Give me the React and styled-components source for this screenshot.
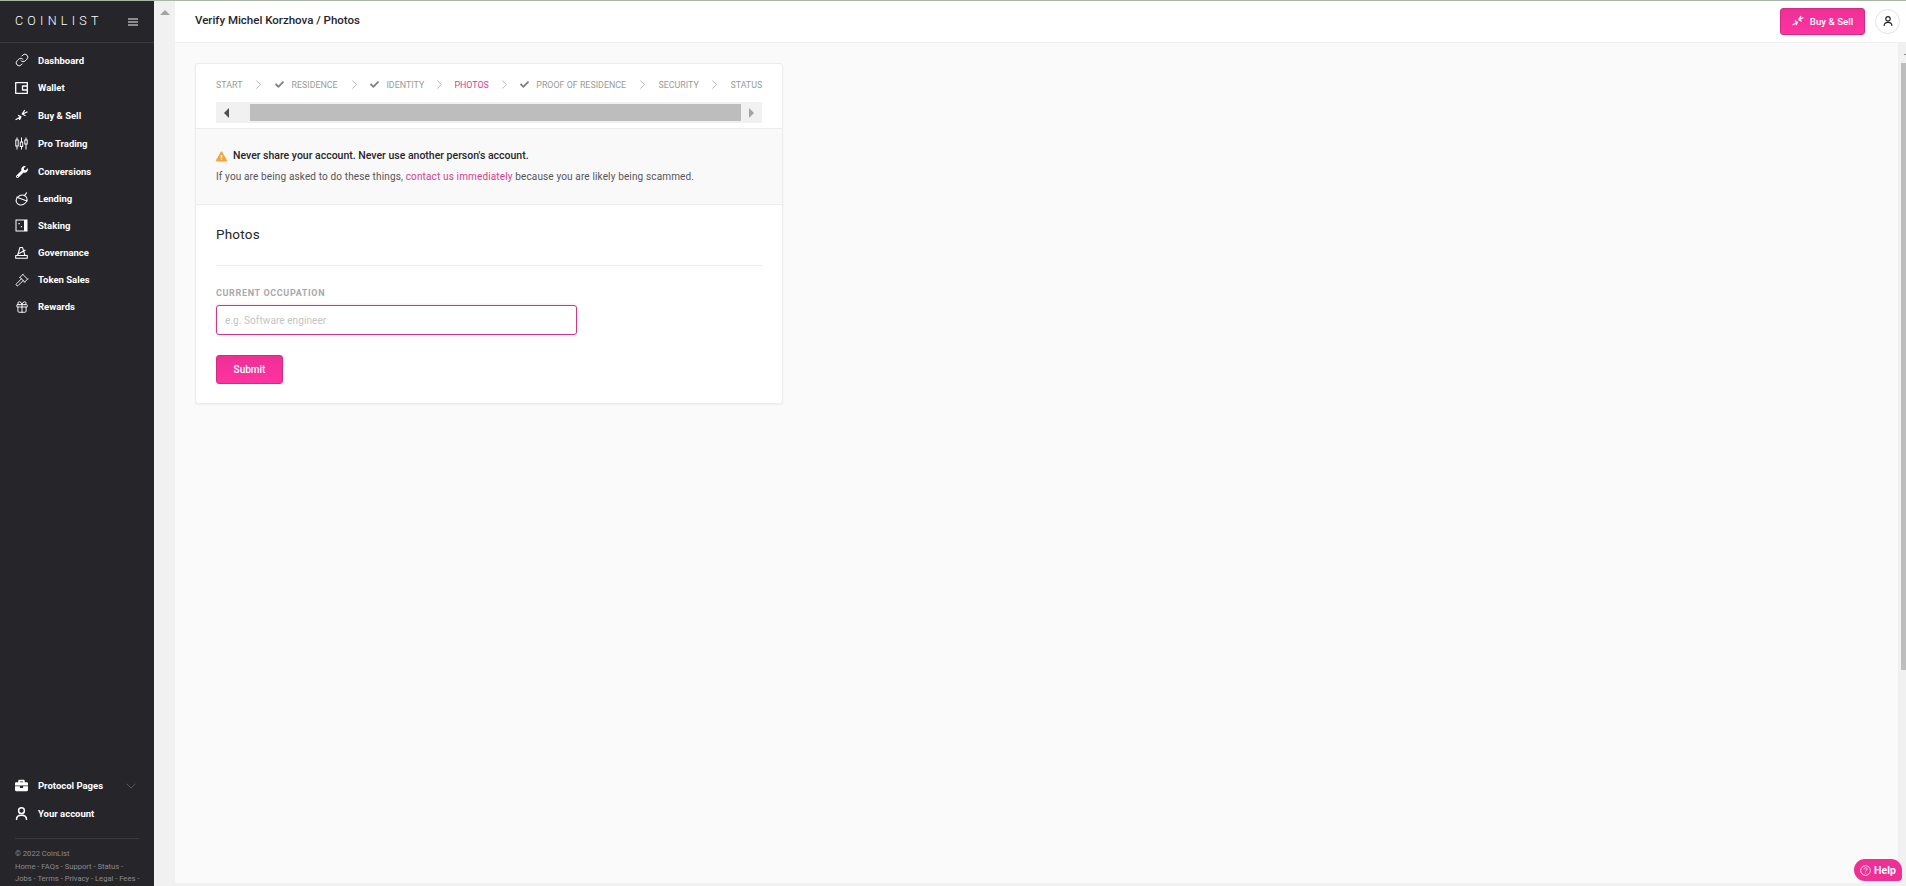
import React from "react";
import styled, { createGlobalStyle } from "styled-components";
import { Link, Gavel, Gift, ChevronDown, ChevronRight } from "lucide-react";
import { FaWrench, FaBriefcase, FaExclamationTriangle, FaCheck } from "react-icons/fa";

const Global = createGlobalStyle`
  html, body { margin: 0; padding: 0; height: 100%; overflow: hidden; }
  body { font-family: Roboto, "Liberation Sans", sans-serif; background: #fafafa; color: #26252a; }
  * { box-sizing: border-box; }
`;

const Page = styled.div`
  position: relative;
  display: flex;
  width: 1906px;
  height: 886px;
  overflow: hidden;
  border-top: 1px solid #a9b5a6;
`;

const Sidebar = styled.aside`
  flex: 0 0 154px;
  width: 154px;
  min-width: 0;
  display: flex;
  flex-direction: column;
  background: #26252a;
  color: #fff;
`;

const Brand = styled.div`
  flex: 0 0 42px;
  display: flex;
  align-items: center;
  justify-content: space-between;
  padding: 0 16px 0 15px;
  border-bottom: 1px solid #3a393e;
`;

const Logo = styled.span`
  font-size: 12.5px;
  font-weight: 300;
  letter-spacing: 4.25px;
  line-height: 1;
`;

const Burger = styled.span`
  width: 10px;
  height: 8px;
  border-top: 2px solid #8b8a8e;
  border-bottom: 2px solid #8b8a8e;
  position: relative;
  &::after {
    content: "";
    position: absolute;
    left: 0;
    right: 0;
    top: 1px;
    height: 2px;
    background: #8b8a8e;
  }
`;

const Nav = styled.nav`
  display: flex;
  flex-direction: column;
  padding-top: 4px;
`;

const NavItem = styled.a`
  flex: 0 0 ${props => props.$h}px;
  display: flex;
  align-items: center;
  gap: 10px;
  padding-left: 15px;
  font-size: 9.5px;
  font-weight: 700;
  color: #fff;
`;

const NavIcon = styled.span`
  flex: 0 0 13px;
  width: 13px;
  height: 14px;
  display: flex;
  align-items: center;
  justify-content: center;
  svg { display: block; flex: none; }
`;

const Foot = styled.div`
  margin-top: auto;
  height: 114px;
  overflow: hidden;
  display: flex;
  flex-direction: column;
`;

const ProtocolRow = styled(NavItem)`
  padding-right: 15px;
  svg.chev { margin-left: auto; color: #6e6d72; }
`;

const Legal = styled.div`
  margin: 11px 15px 0;
  padding-top: 9px;
  border-top: 1px solid #3a393e;
  font-size: 7.6px;
  line-height: 12.5px;
  color: #8c8b8f;
  white-space: nowrap;
  p { margin: 0; }
`;

const SideTrack = styled.div`
  flex: 0 0 21px;
  background: #f1f1f1;
  display: flex;
  justify-content: center;
  padding-top: 9px;
`;

const UpArrow = styled.span`
  width: 0;
  height: 0;
  border-left: 5px solid transparent;
  border-right: 5px solid transparent;
  border-bottom: 5px solid #a3a3a3;
`;

const Main = styled.main`
  flex: 1;
  display: flex;
  flex-direction: column;
  min-width: 0;
`;

const Header = styled.header`
  flex: 0 0 42px;
  display: flex;
  align-items: center;
  padding: 0 6px 0 20px;
  background: #fff;
  border-bottom: 1px solid #f0f0f0;
`;

const Crumb = styled.div`
  font-size: 11.5px;
  font-weight: 500;
  color: #26252a;
  margin-top: -3px;
`;

const HeaderRight = styled.div`
  margin-left: auto;
  display: flex;
  align-items: center;
  gap: 10px;
  margin-top: -1px;
`;

const PinkButton = styled.button`
  display: flex;
  align-items: center;
  justify-content: center;
  gap: 6px;
  width: ${props => props.$w}px;
  height: ${props => props.$h}px;
  background: linear-gradient(#ee2f96, #ff33a1);
  border: 1px solid #d42a86;
  border-radius: 3px;
  color: #fff;
  font-family: inherit;
  font-size: ${props => props.$size}px;
  font-weight: 500;
  padding: 0;
`;

const Avatar = styled.span`
  width: 25px;
  height: 25px;
  border-radius: 50%;
  border: 1px solid #e3e3e3;
  background: #fff;
  display: flex;
  align-items: center;
  justify-content: center;
`;

const Body = styled.div`
  flex: 1;
  display: flex;
  min-height: 0;
`;

const Scroller = styled.div`
  flex: 1;
  display: flex;
  flex-direction: column;
  min-width: 0;
`;

const Content = styled.div`
  flex: 1;
  padding: 20px;
`;

const BottomStrip = styled.div`
  flex: 0 0 3px;
  background: #f1f1f1;
`;

const Card = styled.section`
  width: 588px;
  height: 341px;
  background: #fff;
  border: 1px solid #ececec;
  border-radius: 3px;
  box-shadow: 0 1px 2px rgba(0, 0, 0, 0.05);
`;

const StepsArea = styled.div`
  height: 65px;
  padding: 12px 20px 0;
  border-bottom: 1px solid #ececec;
`;

const Steps = styled.div`
  display: flex;
  align-items: center;
  height: 17px;
  white-space: nowrap;
`;

const Step = styled.span`
  flex: none;
  display: inline-flex;
  align-items: center;
  gap: 7px;
  font-size: 8.9px;
  color: ${props => (props.$active ? "#d63d8e" : "#9a9a9a")};
  svg { color: #7f7f7f; }
`;

const Sep = styled.span`
  flex: 0 0 ${props => props.$w}px;
  display: flex;
  justify-content: center;
  color: #8d8d8d;
`;

const HScroll = styled.div`
  margin-top: 9px;
  height: 21px;
  display: flex;
  align-items: center;
  background: #f1f1f1;
`;

const HButton = styled.span`
  flex: 0 0 ${props => props.$w}px;
  display: flex;
  justify-content: ${props => (props.$left ? "flex-start" : "center")};
  padding-left: ${props => (props.$left ? 8 : 0)}px;
`;

const HArrow = styled.span`
  width: 0;
  height: 0;
  border-top: 5px solid transparent;
  border-bottom: 5px solid transparent;
  ${props => (props.$left ? "border-right: 5px solid #505050;" : "border-left: 5px solid #a3a3a3;")}
`;

const HThumb = styled.span`
  flex: 1;
  height: 17px;
  background: #bdbdbd;
`;

const Warning = styled.div`
  height: 76px;
  padding: 17px 20px 0;
  background: #f9f9f9;
  border-bottom: 1px solid #ececec;
`;

const WarnTitle = styled.div`
  display: flex;
  align-items: center;
  gap: 6px;
  font-size: 10.5px;
  font-weight: 500;
  line-height: 20px;
  color: #26252a;
  svg { color: #f5a33b; }
`;

const WarnText = styled.p`
  margin: 1px 0 0;
  font-size: 10px;
  letter-spacing: 0.14px;
  line-height: 20px;
  color: #55545a;
  a { color: #d63d8e; }
`;

const FormArea = styled.div`
  padding: 19px 20px 0;
`;

const Title = styled.h2`
  margin: 0;
  height: 42px;
  font-size: 13.5px;
  font-weight: 400;
  line-height: 20px;
  letter-spacing: 0.2px;
  color: #26252a;
  border-bottom: 1px solid #ececec;
`;

const Label = styled.label`
  display: block;
  margin-top: 21px;
  font-size: 9px;
  font-weight: 700;
  letter-spacing: 0.65px;
  line-height: 12px;
  color: #a9a8ad;
`;

const Input = styled.input`
  display: block;
  width: 361px;
  height: 30px;
  margin-top: 6px;
  padding: 0 8px;
  border: 1px solid #c8398a;
  border-radius: 3px;
  outline: none;
  box-shadow: 0 0 3px rgba(255, 51, 161, 0.25);
  font-family: inherit;
  font-size: 10px;
  letter-spacing: 0.08px;
  &::placeholder { color: #c4c4c4; }
`;

const SubmitWrap = styled.div`
  margin-top: 20px;
`;

const Help = styled.button`
  position: absolute;
  left: 1854px;
  top: 858px;
  width: 48px;
  height: 22px;
  display: flex;
  align-items: center;
  justify-content: center;
  gap: 3px;
  border: none;
  padding: 0;
  border-radius: 11px 11px 4px 11px;
  background: #ee2f96;
  color: #fff;
  font-family: inherit;
  font-size: 10.5px;
  font-weight: 700;
`;

const RightTrack = styled.div`
  flex: 0 0 8px;
  background: #f1f1f1;
  padding: 11px 0 0 3px;
`;

const RightArrow = styled.div`
  width: 2px;
  height: 1px;
  margin: 0 0 8px 3px;
  background: #8a8a8a;
`;

const RightThumb = styled.div`
  height: 607px;
  background: #bdbdbd;
`;

const stroke = { fill: "none", stroke: "currentColor", strokeWidth: 1.3, strokeLinecap: "round", strokeLinejoin: "round" };

const WalletIcon = () => (
  <svg width="13" height="12" viewBox="0 0 13 12" {...stroke}>
    <rect x="0.7" y="0.7" width="11.6" height="10.6" />
    <path d="M12 4H7.5v4H12" />
  </svg>
);

const SwapIcon = ({ size = 13 }) => (
  <svg width={size} height={size} viewBox="0 0 13 13" {...stroke}>
    <path d="M1 10.5 5.5 8M3.5 6.5l2.4 1.4-1.3 2.5" />
    <path d="M12 3 7.5 5M9.5 1.5 7.2 5l2.8 1.5" />
  </svg>
);

const CandleIcon = () => (
  <svg width="13" height="13" viewBox="0 0 13 13" fill="none" stroke="currentColor" strokeWidth="1">
    <path d="M2 0.5v12M6.5 0.5v12M11 0.5v12" />
    <rect x="0.8" y="3" width="2.4" height="6" fill="#26252a" />
    <rect x="5.3" y="5" width="2.4" height="4.5" fill="#26252a" />
    <rect x="9.8" y="3" width="2.4" height="4" fill="#26252a" />
  </svg>
);

const AcornIcon = () => (
  <svg width="14" height="14" viewBox="0 0 14 14" fill="none" stroke="currentColor" strokeWidth="1.05" strokeLinecap="round">
    <ellipse cx="6.6" cy="8" rx="5.6" ry="4.8" transform="rotate(-25 6.6 8)" />
    <path d="M1.8 5.2 12 9" />
    <path d="M9.5 3.6 11.6 0.9" />
  </svg>
);

const StakeIcon = () => (
  <svg width="13" height="13" viewBox="0 0 13 13">
    <rect x="0.5" y="0.5" width="12" height="12" fill="#fff" />
    <rect x="1.5" y="1.5" width="7.5" height="10" fill="#26252a" />
    <rect x="3.5" y="4" width="1.3" height="1.3" fill="#fff" />
    <rect x="5.8" y="7" width="1.3" height="1.3" fill="#fff" />
  </svg>
);

const GovernanceIcon = () => (
  <svg width="13" height="13" viewBox="0 0 13 13" fill="none" stroke="currentColor" strokeWidth="1.05" strokeLinejoin="round">
    <path d="M2.5 9.5 5 1.5h2.5l2.5 8" />
    <path d="M3 8 10.5 4" />
    <rect x="0.7" y="9.5" width="11.6" height="2.8" />
  </svg>
);

const UserIcon = ({ color = "currentColor", size = 13 }) => (
  <svg width={size} height={size} viewBox="0 0 13 13" fill="none" stroke={color} strokeWidth="1.5" strokeLinecap="round">
    <circle cx="6.5" cy="3.7" r="2.9" />
    <path d="M1.5 12.4c0-2.8 2-4.2 5-4.2s5 1.4 5 4.2" />
  </svg>
);

const navItems = [
  { label: "Dashboard", h: 26.5, icon: <Link size={14} strokeWidth={1.6} /> },
  { label: "Wallet", h: 28, icon: <WalletIcon /> },
  { label: "Buy & Sell", h: 28, icon: <SwapIcon /> },
  { label: "Pro Trading", h: 28, icon: <CandleIcon /> },
  { label: "Conversions", h: 28, icon: <FaWrench size={12} /> },
  { label: "Lending", h: 26.5, icon: <AcornIcon /> },
  { label: "Staking", h: 27, icon: <StakeIcon /> },
  { label: "Governance", h: 27, icon: <GovernanceIcon /> },
  { label: "Token Sales", h: 27, icon: <Gavel size={14} strokeWidth={1.6} /> },
  { label: "Rewards", h: 27, icon: <Gift size={14} strokeWidth={1.6} /> },
];

const steps = [
  { label: "START", sep: 33 },
  { label: "RESIDENCE", done: true, sep: 32.8 },
  { label: "IDENTITY", done: true, sep: 30.2 },
  { label: "PHOTOS", active: true, sep: 31.4 },
  { label: "PROOF OF RESIDENCE", done: true, sep: 32.4 },
  { label: "SECURITY", sep: 31.6 },
  { label: "STATUS" },
];

export default function App() {
  return (
    <>
      <Global />
      <Page>
        <Sidebar>
          <Brand>
            <Logo>COINLIST</Logo>
            <Burger />
          </Brand>
          <Nav>
            {navItems.map(item => (
              <NavItem key={item.label} $h={item.h}>
                <NavIcon>{item.icon}</NavIcon>
                {item.label}
              </NavItem>
            ))}
          </Nav>
          <Foot>
            <ProtocolRow $h={27}>
              <NavIcon><FaBriefcase size={13} /></NavIcon>
              Protocol Pages
              <ChevronDown className="chev" size={16} strokeWidth={1} />
            </ProtocolRow>
            <NavItem $h={28}>
              <NavIcon><UserIcon /></NavIcon>
              Your account
            </NavItem>
            <Legal>
              <p>© 2022 CoinList</p>
              <p>Home - FAQs - Support - Status -</p>
              <p>Jobs - Terms - Privacy - Legal - Fees -</p>
            </Legal>
          </Foot>
        </Sidebar>
        <SideTrack><UpArrow /></SideTrack>
        <Main>
          <Header>
            <Crumb>Verify Michel Korzhova / Photos</Crumb>
            <HeaderRight>
              <PinkButton $w={85} $h={27} $size={9.7}>
                <SwapIcon size={12} />
                Buy &amp; Sell
              </PinkButton>
              <Avatar><UserIcon color="#26252a" size={10} /></Avatar>
            </HeaderRight>
          </Header>
          <Body>
            <Scroller>
              <Content>
                <Card>
                  <StepsArea>
                    <Steps>
                      {steps.map(s => (
                        <React.Fragment key={s.label}>
                          <Step $active={s.active}>
                            {s.done && <FaCheck size={9} />}
                            {s.label}
                          </Step>
                          {s.sep && (
                            <Sep $w={s.sep}>
                              <ChevronRight size={15} strokeWidth={1} />
                            </Sep>
                          )}
                        </React.Fragment>
                      ))}
                    </Steps>
                    <HScroll>
                      <HButton $w={34} $left><HArrow $left /></HButton>
                      <HThumb />
                      <HButton $w={21}><HArrow /></HButton>
                    </HScroll>
                  </StepsArea>
                  <Warning>
                    <WarnTitle>
                      <FaExclamationTriangle size={11} />
                      Never share your account. Never use another person's account.
                    </WarnTitle>
                    <WarnText>
                      If you are being asked to do these things, <a>contact us immediately</a> because you are likely being scammed.
                    </WarnText>
                  </Warning>
                  <FormArea>
                    <Title>Photos</Title>
                    <Label>CURRENT OCCUPATION</Label>
                    <Input placeholder="e.g. Software engineer" />
                    <SubmitWrap>
                      <PinkButton $w={67} $h={29} $size={10}>Submit</PinkButton>
                    </SubmitWrap>
                  </FormArea>
                </Card>
              </Content>
              <BottomStrip />
            </Scroller>
            <RightTrack>
              <RightArrow />
              <RightThumb />
            </RightTrack>
          </Body>
        </Main>
        <Help>
          <svg width="11" height="11" viewBox="0 0 11 11" fill="none" stroke="#fff" strokeWidth="0.8">
            <circle cx="5.5" cy="5.5" r="4.8" />
            <path d="M4 4.3c0-2 3-2 3 0 0 1.1-1.5 1-1.5 2.2M5.5 7.6v.8" />
          </svg>
          Help
        </Help>
      </Page>
    </>
  );
}
